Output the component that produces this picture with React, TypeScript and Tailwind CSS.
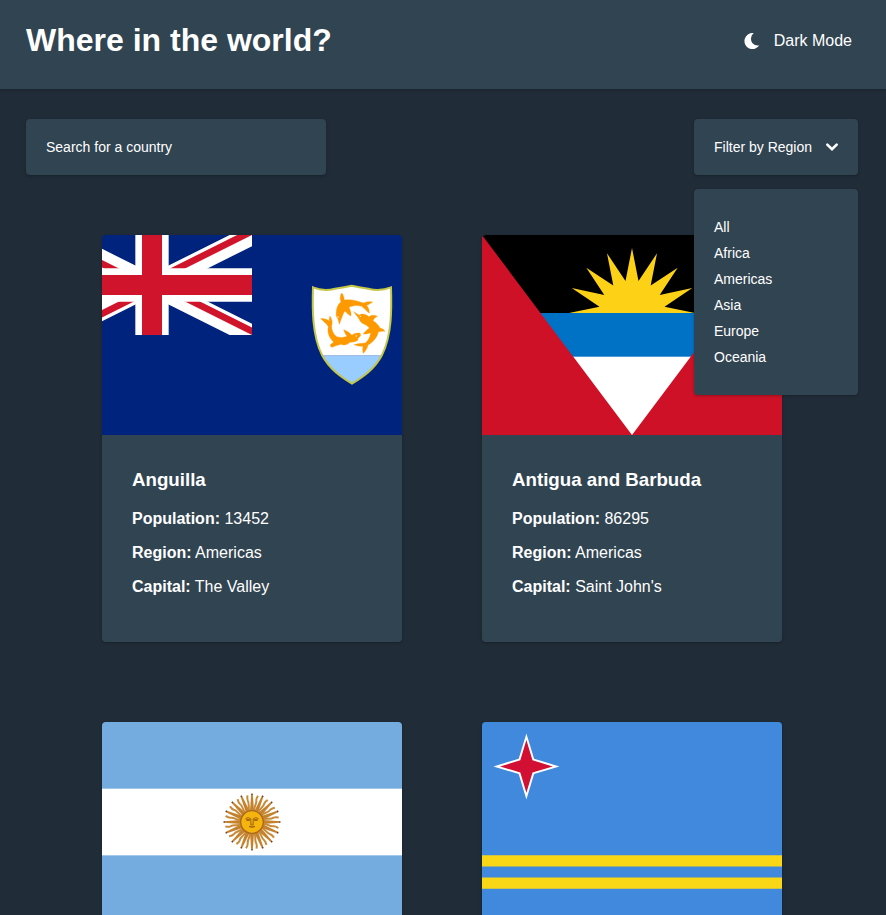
import React from "react";

const regions = ["All", "Africa", "Americas", "Asia", "Europe", "Oceania"];

function AnguillaFlag() {
  return (
    <svg viewBox="0 0 300 200" className="block h-[200px] w-[300px]">
      <rect width="300" height="200" fill="#00247d" />
      <svg x="0" y="0" width="150" height="100" viewBox="15 0 45 30">
        <clipPath id="saltire">
          <path d="M30,15 h30 v15 z v15 h-30 z h-30 v-15 z v-15 h30 z" />
        </clipPath>
        <path d="M0,0 L60,30 M60,0 L0,30" stroke="#fff" strokeWidth="6" />
        <path d="M0,0 L60,30 M60,0 L0,30" clipPath="url(#saltire)" stroke="#cf142b" strokeWidth="4" />
        <path d="M30,0 v30 M0,15 h60" stroke="#fff" strokeWidth="10" />
        <path d="M30,0 v30 M0,15 h60" stroke="#cf142b" strokeWidth="6" />
      </svg>
      <g transform="translate(198 40) scale(.33333)">
        <clipPath id="shield">
          <path d="M39 37 Q70 50 105 41 Q135 36 155 32 Q175 36 205 41 Q240 50 273 37 C275 100 276 180 246 240 C224 282 190 305 156 326 C122 305 88 282 66 240 C36 180 37 100 39 37Z" />
        </clipPath>
        <g clipPath="url(#shield)">
          <rect x="30" y="20" width="250" height="222" fill="#fff" />
          <rect x="30" y="242" width="250" height="90" fill="#9cf" />
        </g>
        <path d="M39 37 Q70 50 105 41 Q135 36 155 32 Q175 36 205 41 Q240 50 273 37 C275 100 276 180 246 240 C224 282 190 305 156 326 C122 305 88 282 66 240 C36 180 37 100 39 37Z" fill="none" stroke="#c4c648" strokeWidth="6" />
        <g fill="#f90" stroke="#f90" strokeWidth="1">
          <path d="M125 54 C131 60 132 68 133 75 C151 72 170 76 190 84 C200 80 208 79 218 81 C211 86 206 88 200 91 C206 99 208 106 208 115 C201 109 193 101 185 94 C172 90 158 92 147 97 C151 106 154 113 153 123 C146 119 139 113 135 108 C129 115 128 123 124 131 L118 148 L114 132 C107 126 108 114 110 103 C112 92 117 85 123 80 C119 71 120 62 125 54Z" />
          <path d="M161 110 L178 121 C184 114 197 117 207 125 C216 119 224 120 232 124 C225 128 221 132 219 137 C229 143 236 151 240 159 C248 160 252 164 255 169 C247 168 242 168 235 171 C231 189 218 202 204 210 C202 219 198 227 190 235 C187 228 188 221 189 214 C180 214 172 213 162 209 C172 206 184 205 196 204 C206 195 211 184 212 173 C205 176 197 178 190 177 C194 170 202 163 208 159 C204 152 195 149 187 145 C180 140 178 134 176 130Z" />
          <path d="M90 123 C97 134 98 144 95 152 C94 165 101 178 110 185 C121 188 132 188 141 184 C137 177 133 172 131 164 C143 168 151 175 156 181 C161 175 168 174 179 174 C184 178 183 183 174 190 C177 199 160 202 149 202 C141 211 132 211 121 208 C115 211 105 212 97 217 C93 215 90 214 91 209 C95 206 98 204 101 201 C88 189 81 173 85 155 C79 144 70 139 62 131 C73 130 82 133 88 138 C87 133 88 128 90 123Z" />
        </g>
        <g fill="#fff">
          <circle cx="114" cy="126" r="2" />
          <circle cx="181" cy="124" r="2" />
          <circle cx="169" cy="183" r="2" />
        </g>
      </g>
    </svg>
  );
}

function AntiguaFlag() {
  return (
    <svg viewBox="0 0 300 200" className="block h-[200px] w-[300px]">
      <rect width="300" height="200" fill="#ce1126" />
      <clipPath id="vee">
        <path d="M0 0H300L150 200Z" />
      </clipPath>
      <g clipPath="url(#vee)">
        <rect width="300" height="78" />
        <rect y="78" width="300" height="44" fill="#0072c6" />
        <rect y="121.7" width="300" height="80" fill="#fff" />
      </g>
      <path
        fill="#fcd116"
        d="M150 13L156.5 46L175 18.3L168.7 50.5L195.7 32.7L177.7 60L210.3 53L182.5 71.7L213 78H87L117.5 71.7L89.7 53L122.3 60L104.3 32.7L131.3 50.5L125 18.3L143.5 46Z"
      />
    </svg>
  );
}

function ArgentinaFlag() {
  const rays = Array.from({ length: 16 }, (_, i) => i * 22.5);
  return (
    <svg viewBox="0 0 300 200" className="block h-[200px] w-[300px]">
      <rect width="300" height="200" fill="#74acdf" />
      <rect y="66.67" width="300" height="66.67" fill="#fff" />
      <g transform="translate(150 100)">
        {rays.map((a) => (
          <g key={a} transform={`rotate(${a})`}>
            <path d="M-2 -11L-.8 -28.3H.8L2 -11Z" fill="#c4822c" />
            <circle cy="-27.8" r=".8" fill="#69403d" />
            <path
              d="M0 -11C-1.8 -15 1.6 -18 0 -22C-.5 -24 .2 -25.5 .8 -27"
              transform="rotate(11.25)"
              fill="none"
              stroke="#c98a38"
              strokeWidth="2"
            />
          </g>
        ))}
        <circle r="11.3" fill="#f6b40e" stroke="#a5681c" strokeWidth="1.3" />
        <g fill="none" stroke="#8a4f0c" strokeWidth=".8">
          <path d="M-6.5 -3.2Q-3.8 -5.6 -1.2 -3.2V1.6M6.5 -3.2Q3.8 -5.6 1.2 -3.2V1.6" />
          <path d="M-5.6 -2H-2.2M2.2 -2H5.6" strokeWidth="1.5" />
          <path d="M-2.8 4.6Q0 3.4 2.8 4.6Q0 6.3 -2.8 4.6M-2 2.2H2" />
        </g>
      </g>
    </svg>
  );
}

function ArubaFlag() {
  return (
    <svg viewBox="0 0 300 200" className="block h-[200px] w-[300px]">
      <rect width="300" height="200" fill="#4189dd" />
      <path d="M0 133.3H300V144.4H0ZM0 155.6H300V166.7H0Z" fill="#f9d616" />
      <g transform="translate(44.4 44.4)">
        <path d="M0 -33L7.7 -7.7L33 0L7.7 7.7L0 33L-7.7 7.7L-33 0L-7.7 -7.7Z" fill="#fff" />
        <path d="M0 -26.3L6.1 -6.1L26.3 0L6.1 6.1L0 26.3L-6.1 6.1L-26.3 0L-6.1 -6.1Z" fill="#d21034" />
      </g>
    </svg>
  );
}

type Country = {
  id: string;
  Flag: () => React.JSX.Element;
  info?: { name: string; population: number; region: string; capital: string };
};

const countries: Country[] = [
  {
    id: "ai",
    Flag: AnguillaFlag,
    info: { name: "Anguilla", population: 13452, region: "Americas", capital: "The Valley" },
  },
  {
    id: "ag",
    Flag: AntiguaFlag,
    info: { name: "Antigua and Barbuda", population: 86295, region: "Americas", capital: "Saint John's" },
  },
  { id: "ar", Flag: ArgentinaFlag },
  { id: "aw", Flag: ArubaFlag },
];

function Detail({ label, value }: { label: string; value: string | number }) {
  return (
    <p className="mb-4 text-base leading-[18px]">
      <b>{label}:</b> {value}
    </p>
  );
}

export default function App() {
  return (
    <div className="h-[915px] overflow-hidden bg-[#202c37] font-['Liberation_Sans',Arial,sans-serif] text-white">
      <header className="flex h-[89px] items-start justify-between bg-[#314452] pr-[34px] pl-[26px] shadow-[0_1px_3px_rgba(0,0,0,0.2)]">
        <h1 className="mt-[22px] text-[32px] leading-[37px] font-bold">Where in the world?</h1>
        <button className="mt-8 flex items-center text-base leading-[18px]">
          <svg viewBox="0 0 16 16" className="mr-[14px] h-4 w-4" fill="#fff">
            <path d="M9.8 .2A8 8 0 1 0 15.3 12.2C10.9 13.2 7 10.2 7 6C7 3.4 8.2 1.4 9.8 .2Z" />
          </svg>
          Dark Mode
        </button>
      </header>

      <main>
        <div className="flex justify-between pt-[30px] pr-[28px] pl-[26px] text-sm">
          <input
            className="h-14 w-[300px] rounded bg-[#314452] px-5 shadow-[0_1px_3px_rgba(0,0,0,0.25)] outline-none placeholder:text-white placeholder:opacity-100"
            placeholder="Search for a country"
          />
          <div className="relative">
            <button className="flex h-14 w-[164px] items-center justify-between rounded bg-[#314452] px-5 shadow-[0_1px_3px_rgba(0,0,0,0.25)]">
              Filter by Region
              <svg
                viewBox="0 0 12 8"
                className="h-2 w-3 overflow-visible"
                fill="none"
                stroke="#fff"
                strokeWidth="2.6"
                strokeLinecap="round"
              >
                <path d="M1.3 1.6L6 6.2L10.7 1.6" />
              </svg>
            </button>
            <ul className="absolute top-[70px] left-0 z-10 h-[206px] w-[164px] rounded bg-[#314452] px-5 pt-[25px] shadow-[0_1px_3px_rgba(0,0,0,0.25)]">
              {regions.map((r) => (
                <li key={r} className="h-[26px] leading-[26px]">{r}</li>
              ))}
            </ul>
          </div>
        </div>

        <section className="mt-[60px] ml-[102px] grid w-[680px] grid-cols-[300px_300px] gap-20">
          {countries.map(({ id, Flag, info }) => (
            <article key={id} className="h-[407px] overflow-hidden rounded bg-[#314452] shadow-[0_1px_3px_rgba(0,0,0,0.25)]">
              <Flag />
              {info && (
                <div className="px-[30px] pt-[34px]">
                  <h2 className="mb-[19px] text-[18.72px] leading-[22px] font-bold">{info.name}</h2>
                  <Detail label="Population" value={info.population} />
                  <Detail label="Region" value={info.region} />
                  <Detail label="Capital" value={info.capital} />
                </div>
              )}
            </article>
          ))}
        </section>
      </main>
    </div>
  );
}
